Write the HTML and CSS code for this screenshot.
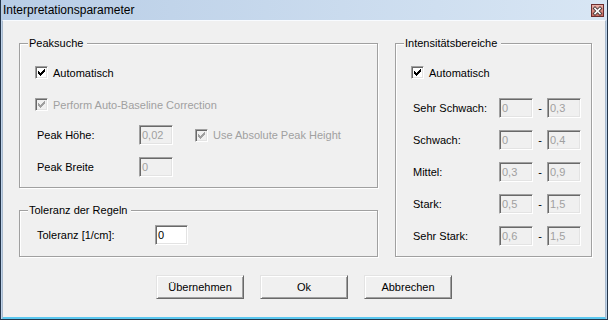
FILE: index.html
```html
<!DOCTYPE html>
<html lang="de">
<head>
    <meta charset="UTF-8" />
    <title>Interpretationsparameter</title>
    <link rel="stylesheet" href="styles.css">
</head>
<body>
<div class="window">
    <header class="titlebar">
        <span class="title">Interpretationsparameter</span>
        <span class="close-btn">
            <svg width="11" height="12" viewBox="0 0 11 12">
                <path d="M3 3.5 L8 8.5 M8 3.5 L3 8.5" stroke="#4a3a3a" stroke-width="3.4" stroke-linecap="square" fill="none"/>
                <path d="M3 3.5 L8 8.5 M8 3.5 L3 8.5" stroke="#fff" stroke-width="1.6" stroke-linecap="square" fill="none"/>
            </svg>
        </span>
    </header>

    <main class="client">
        <div class="panels">
            <div class="left-col">
                <fieldset class="group">
                    <legend>Peaksuche</legend>
                    <div class="group-body">
                        <div class="check-row row-first">
                            <span class="checkbox">
                                <svg width="11" height="11" viewBox="1 1 11 11" shape-rendering="crispEdges"><path d="M9 3h1v1h-1z M8 4h2v1h-2z M3 5h1v1h-1z M7 5h3v1h-3z M3 6h2v1h-2z M6 6h3v1h-3z M3 7h5v1h-5z M4 8h3v1h-3z M5 9h1v1h-1z"/></svg>
                            </span>
                            <span class="check-text">Automatisch</span>
                        </div>
                        <div class="check-row row-second disabled">
                            <span class="checkbox">
                                <svg width="11" height="11" viewBox="1 1 11 11" shape-rendering="crispEdges"><path d="M9 3h1v1h-1z M8 4h2v1h-2z M3 5h1v1h-1z M7 5h3v1h-3z M3 6h2v1h-2z M6 6h3v1h-3z M3 7h5v1h-5z M4 8h3v1h-3z M5 9h1v1h-1z"/></svg>
                            </span>
                            <span class="check-text">Perform Auto-Baseline Correction</span>
                        </div>
                        <div class="field-row row-height">
                            <span class="field-label peak-label">Peak Höhe:</span>
                            <span class="textbox">0,02</span>
                            <div class="check-row inline-check disabled">
                                <span class="checkbox">
                                    <svg width="11" height="11" viewBox="1 1 11 11" shape-rendering="crispEdges"><path d="M9 3h1v1h-1z M8 4h2v1h-2z M3 5h1v1h-1z M7 5h3v1h-3z M3 6h2v1h-2z M6 6h3v1h-3z M3 7h5v1h-5z M4 8h3v1h-3z M5 9h1v1h-1z"/></svg>
                                </span>
                                <span class="check-text">Use Absolute Peak Height</span>
                            </div>
                        </div>
                        <div class="field-row row-next">
                            <span class="field-label peak-label">Peak Breite</span>
                            <span class="textbox">0</span>
                        </div>
                    </div>
                </fieldset>

                <fieldset class="group group-tol">
                    <legend>Toleranz der Regeln</legend>
                    <div class="group-body body-tol">
                        <div class="field-row">
                            <span class="field-label tol-label">Toleranz [1/cm]:</span>
                            <span class="textbox textbox-white">0</span>
                        </div>
                    </div>
                </fieldset>
            </div>

            <fieldset class="group">
                <legend>Intensitätsbereiche</legend>
                <div class="group-body">
                    <div class="check-row row-first">
                        <span class="checkbox">
                            <svg width="11" height="11" viewBox="1 1 11 11" shape-rendering="crispEdges"><path d="M9 3h1v1h-1z M8 4h2v1h-2z M3 5h1v1h-1z M7 5h3v1h-3z M3 6h2v1h-2z M6 6h3v1h-3z M3 7h5v1h-5z M4 8h3v1h-3z M5 9h1v1h-1z"/></svg>
                        </span>
                        <span class="check-text">Automatisch</span>
                    </div>
                    <div class="field-row row-range-first">
                        <span class="field-label range-label">Sehr Schwach:</span>
                        <span class="textbox">0</span>
                        <span class="dash">-</span>
                        <span class="textbox">0,3</span>
                    </div>
                    <div class="field-row row-next">
                        <span class="field-label range-label">Schwach:</span>
                        <span class="textbox">0</span>
                        <span class="dash">-</span>
                        <span class="textbox">0,4</span>
                    </div>
                    <div class="field-row row-next">
                        <span class="field-label range-label">Mittel:</span>
                        <span class="textbox">0,3</span>
                        <span class="dash">-</span>
                        <span class="textbox">0,9</span>
                    </div>
                    <div class="field-row row-next">
                        <span class="field-label range-label">Stark:</span>
                        <span class="textbox">0,5</span>
                        <span class="dash">-</span>
                        <span class="textbox">1,5</span>
                    </div>
                    <div class="field-row row-next">
                        <span class="field-label range-label">Sehr Stark:</span>
                        <span class="textbox">0,6</span>
                        <span class="dash">-</span>
                        <span class="textbox">1,5</span>
                    </div>
                </div>
            </fieldset>
        </div>

        <footer class="buttons">
            <button class="btn">Übernehmen</button>
            <button class="btn">Ok</button>
            <button class="btn">Abbrechen</button>
        </footer>
    </main>
</div>
</body>
</html>
```

FILE: styles.css
```css
:root {
    --face: #f0f0f0;
    --shadow: #a0a0a0;
    --dark-shadow: #696969;
    --light: #e3e3e3;
    --gray-text: #a0a0a0;
    --font: "Liberation Sans", Arial, sans-serif;
}

* { box-sizing: border-box; }

body {
    margin: 0;
    font-family: var(--font);
    font-size: 11px;
    color: #000;
    background: #fff;
}

.window {
    width: 608px;
    height: 320px;
    display: flex;
    flex-direction: column;
    background: #bfd3ea;
    border: 1px solid #25364a;
    border-top: 0;
}

/* title bar */
.titlebar {
    height: 20px;
    flex: none;
    display: flex;
    align-items: flex-start;
    padding: 0 3px 0 2px;
    background: linear-gradient(to right, #b8cde6, #d8e6f4);
}
.title {
    font-size: 12px;
    line-height: 20px;
}
.close-btn {
    margin: 4px 0 0 auto;
    width: 13px;
    height: 13px;
    display: flex;
    align-items: center;
    justify-content: center;
    border: 1px solid #6b2d2d;
    background: linear-gradient(#eab1a8, #c96a60);
}

/* client area */
.client {
    flex: 1;
    margin: 0 1px;
    background: var(--face);
    border-top: 1px solid #f8fbff;
    border-left: 1px solid #a9bacd;
    border-right: 1px solid #a9bacd;
    border-bottom: 2px solid #5ac7ef;
}

.panels {
    display: grid;
    grid-template-columns: 359px 197px;
    column-gap: 17px;
    padding: 15px 0 0 16px;
}
.left-col { display: flex; flex-direction: column; }

/* etched group box */
.group {
    margin: 0;
    min-width: 0;
    padding: 0 0 0 8px;
    border: 1px solid var(--shadow);
    box-shadow: 1px 1px 0 #fff, inset 1px 1px 0 #fff;
}
.group legend {
    padding: 0 4px 0 1px;
    line-height: 15px;
    background: var(--face);
}
.group-body { padding: 0 0 10px 7px; }
.group-tol { margin-top: 15px; flex: 1; }
.body-tol { padding-top: 7px; }

/* checkboxes */
.check-row {
    display: flex;
    align-items: center;
    height: 13px;
}
.row-first { margin-top: 15px; }
.row-second { margin-top: 19px; }
.checkbox {
    width: 13px;
    height: 13px;
    flex: none;
    display: flex;
    border: 1px solid;
    border-color: var(--shadow) #fff #fff var(--shadow);
    box-shadow: inset 1px 1px 0 var(--dark-shadow), inset -1px -1px 0 var(--light);
    background: #fff;
}
.checkbox svg { fill: #000; }
.check-text { margin-left: 5px; white-space: nowrap; }
.disabled .checkbox { background: var(--face); }
.disabled .checkbox svg { fill: var(--gray-text); }
.disabled .check-text { color: var(--gray-text); }
.inline-check { margin-left: 22px; }

/* label + textbox rows */
.field-row {
    display: flex;
    align-items: center;
    height: 20px;
}
.row-height { margin-top: 14px; }
.row-next { margin-top: 12px; }
.row-range-first { margin-top: 19px; }

.field-label { margin-left: 2px; flex: none; white-space: nowrap; }
.peak-label { width: 102px; }
.tol-label { width: 118px; }
.range-label { width: 86px; }

.textbox {
    width: 34px;
    height: 20px;
    flex: none;
    padding-left: 2px;
    line-height: 18px;
    color: var(--gray-text);
    background: var(--face);
    border: 1px solid;
    border-color: var(--shadow) #fff #fff var(--shadow);
    box-shadow: inset 1px 1px 0 var(--dark-shadow), inset -1px -1px 0 var(--light);
}
.textbox-white {
    width: 33px;
    color: #000;
    background: #fff;
}
.dash { width: 14px; text-align: center; }

/* dialog buttons */
.buttons {
    display: flex;
    justify-content: center;
    gap: 16px;
    margin-top: 18px;
}
.btn {
    width: 88px;
    height: 24px;
    padding: 0;
    font-family: var(--font);
    font-size: 11px;
    color: #000;
    background: var(--face);
    border: 1px solid;
    border-color: var(--light) var(--dark-shadow) var(--dark-shadow) var(--light);
    box-shadow: inset 1px 1px 0 #fff, inset -1px -1px 0 var(--shadow);
}
```
